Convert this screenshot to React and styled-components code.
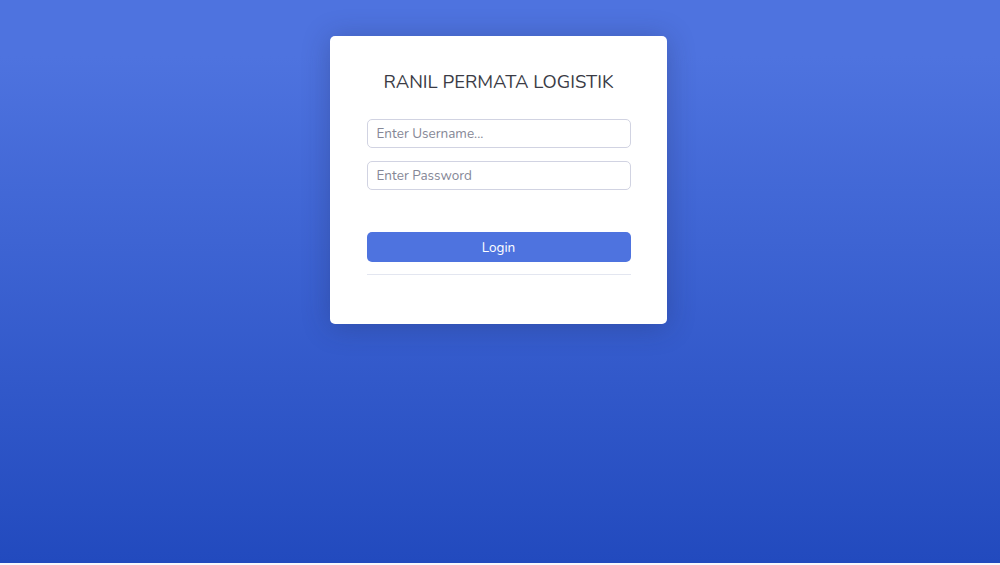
import React from "react";
import styled, { createGlobalStyle } from "styled-components";

const Global = createGlobalStyle`
  html, body { margin: 0; padding: 0; background: #f8f9fc; }
  body { font-family: "Nunito", Lato, "Noto Sans", sans-serif; }
  * { box-sizing: border-box; }
`;

const Page = styled.div`
  height: 563px;
  background: linear-gradient(180deg, #4e73df 10%, #224abe 100%);
  display: flex;
  justify-content: center;
  align-items: flex-start;
  padding: 36px 4px 0 0;
`;

const Card = styled.div`
  width: 337px;
  height: 288px;
  background: #fff;
  border-radius: 5px;
  box-shadow: 0 0.15rem 1.75rem 0 rgba(33, 40, 80, 0.3);
  padding: 34px 36px 0 37px;
  display: flex;
  flex-direction: column;
`;

const Title = styled.h1`
  margin: 0 0 25px;
  text-align: center;
  font-size: 18.5px;
  font-weight: 400;
  color: #3a3b45;
  line-height: 24px;
`;

const Form = styled.form`
  display: flex;
  flex-direction: column;
`;

const Input = styled.input`
  height: 29px;
  width: 100%;
  border: 1px solid #d1d3e2;
  border-radius: 5px;
  padding: 0 9px;
  font-family: inherit;
  font-size: 13.5px;
  color: #6e707e;
  margin-bottom: ${(p) => p.$mb || 0}px;
  outline: none;
  &::placeholder { color: #858796; }
`;

const Button = styled.button`
  height: 30px;
  width: 100%;
  border: none;
  border-radius: 5px;
  background: #4e73df;
  color: #fff;
  font-family: inherit;
  font-size: 13.5px;
  cursor: pointer;
`;

const Divider = styled.hr`
  margin: 12px 0 0;
  border: 0;
  border-top: 1px solid #e3e6f0;
`;

export default function App() {
  return (
    <>
      <Global />
      <Page>
        <Card>
          <Title>RANIL PERMATA LOGISTIK</Title>
          <Form onSubmit={(e) => e.preventDefault()}>
            <Input $mb={13} placeholder="Enter Username..." />
            <Input $mb={42} type="password" placeholder="Enter Password" />
            <Button type="submit">Login</Button>
          </Form>
          <Divider />
        </Card>
      </Page>
    </>
  );
}
